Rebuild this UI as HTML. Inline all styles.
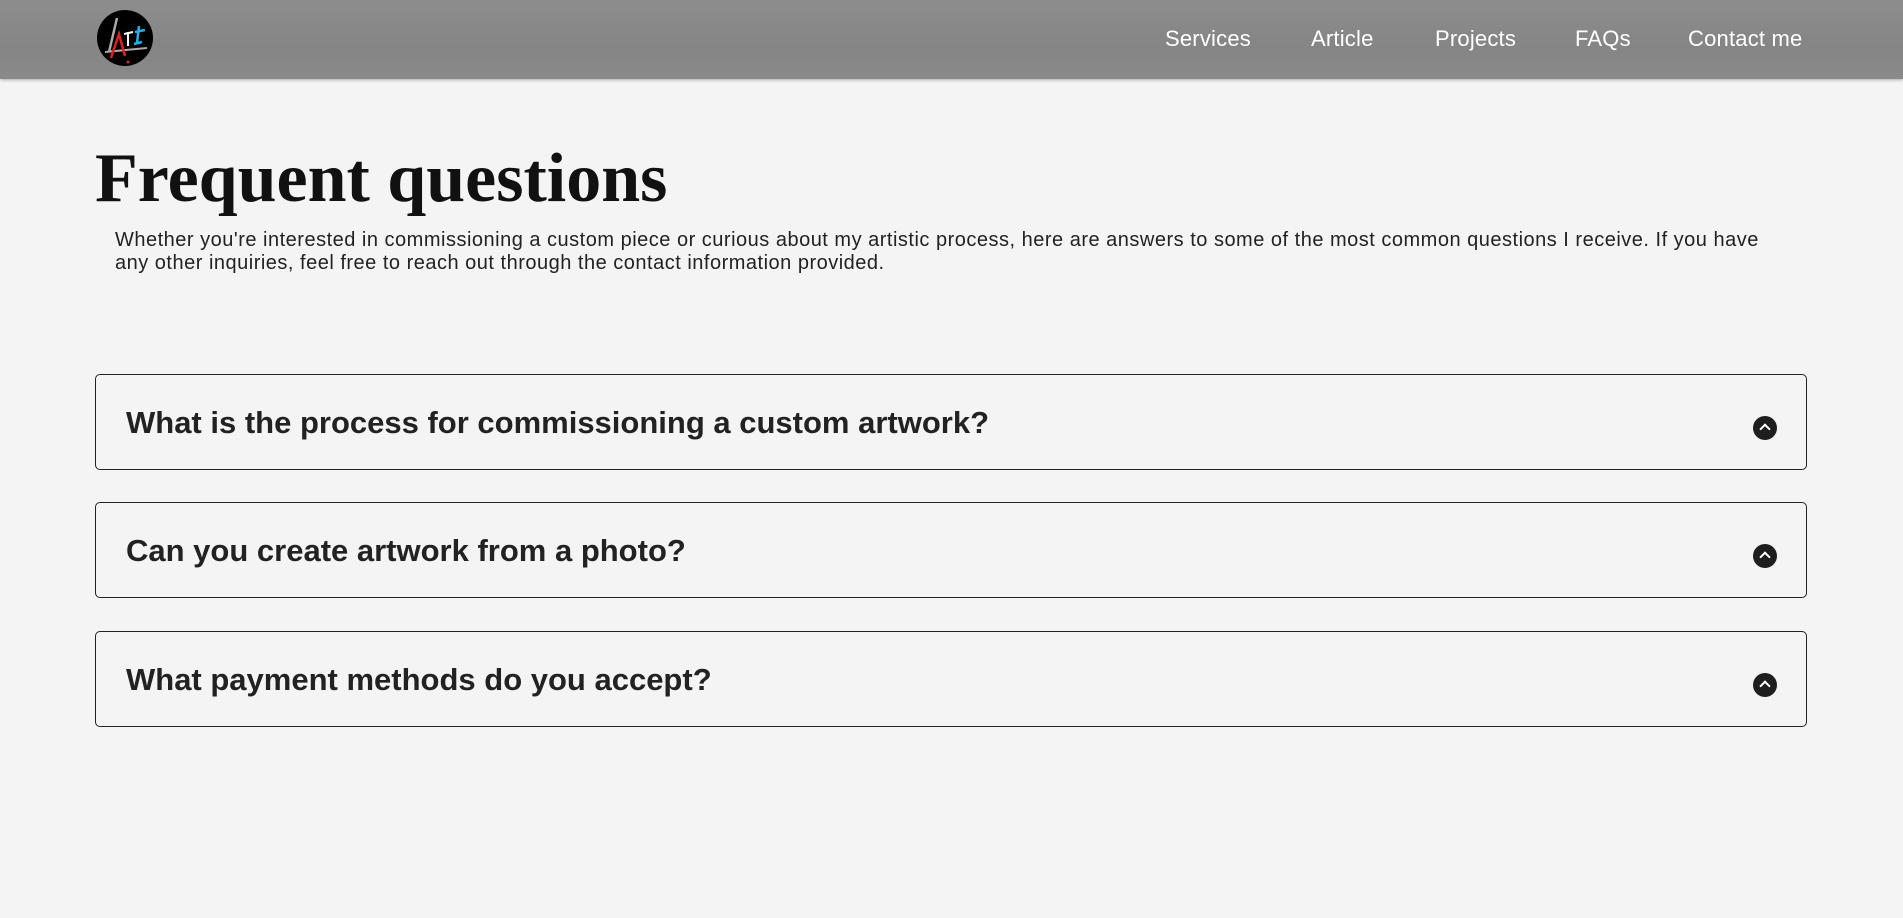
<!DOCTYPE html>
<html><head><style>
*{margin:0;padding:0;box-sizing:border-box}
body{width:1903px;height:918px;background:#f4f4f4;font-family:"Liberation Sans",sans-serif;position:relative;overflow:hidden;color:#222}
nav{position:absolute;left:0;top:0;width:1903px;height:79px;background:linear-gradient(#8d8d8d,#858585 60%,#8a8a8a);box-shadow:0 1px 3px rgba(0,0,0,.3)}
nav a{position:absolute;top:26px;color:#fff;font-size:22px;letter-spacing:0.2px;text-decoration:none}
.logo{position:absolute;left:97px;top:10px;width:56px;height:56px;border-radius:50%;background:#000}
h1{position:absolute;left:95px;top:139px;font-family:"Liberation Serif",serif;font-weight:bold;font-size:70px;letter-spacing:0px;color:#111;white-space:nowrap}
p{position:absolute;left:115px;top:229px;width:1660px;font-size:20px;letter-spacing:0.5px;line-height:23px;color:#222}
.q{position:absolute;left:95px;width:1712px;height:96px;border:1px solid #222;border-radius:5px}
.q span{position:absolute;left:30px;top:30px;font-weight:bold;font-size:31px;color:#222}
.q i{position:absolute;left:1657px;top:41px;width:24px;height:24px;border-radius:50%;background:#1e1e1e}
.q i:after{content:"";position:absolute;left:8px;top:9px;width:6px;height:6px;border-left:2.5px solid #fff;border-top:2.5px solid #fff;transform:rotate(45deg)}
</style></head><body>
<nav>
<div class="logo"><svg width="56" height="56" viewBox="0 0 56 56">
<path d="M20 8 L12 42" stroke="#aaa" stroke-width="2.5"/>
<path d="M8 42 L50 38" stroke="#aaa" stroke-width="2"/>
<path d="M14 48 L22 24 L28 46" stroke="#e02020" stroke-width="2.5" fill="none"/>
<circle cx="31" cy="52" r="1.5" fill="#e02020"/>
<path d="M27 24 L36 22 M31 22 L31 36" stroke="#fff" stroke-width="2"/>
<path d="M38 22 L48 20 M42 16 L40 33 M37 34 L45 32" stroke="#20b0f0" stroke-width="2.5"/>
</svg></div>
<a style="left:1165px">Services</a>
<a style="left:1311px">Article</a>
<a style="left:1435px">Projects</a>
<a style="left:1575px">FAQs</a>
<a style="left:1688px">Contact me</a>
</nav>
<h1>Frequent questions</h1>
<p>Whether you're interested in commissioning a custom piece or curious about my artistic process, here are answers to some of the most common questions I receive. If you have any other inquiries, feel free to reach out through the contact information provided.</p>
<div class="q" style="top:374px"><span>What is the process for commissioning a custom artwork?</span><i></i></div>
<div class="q" style="top:502px"><span>Can you create artwork from a photo?</span><i></i></div>
<div class="q" style="top:631px"><span>What payment methods do you accept?</span><i></i></div>
</body></html>
